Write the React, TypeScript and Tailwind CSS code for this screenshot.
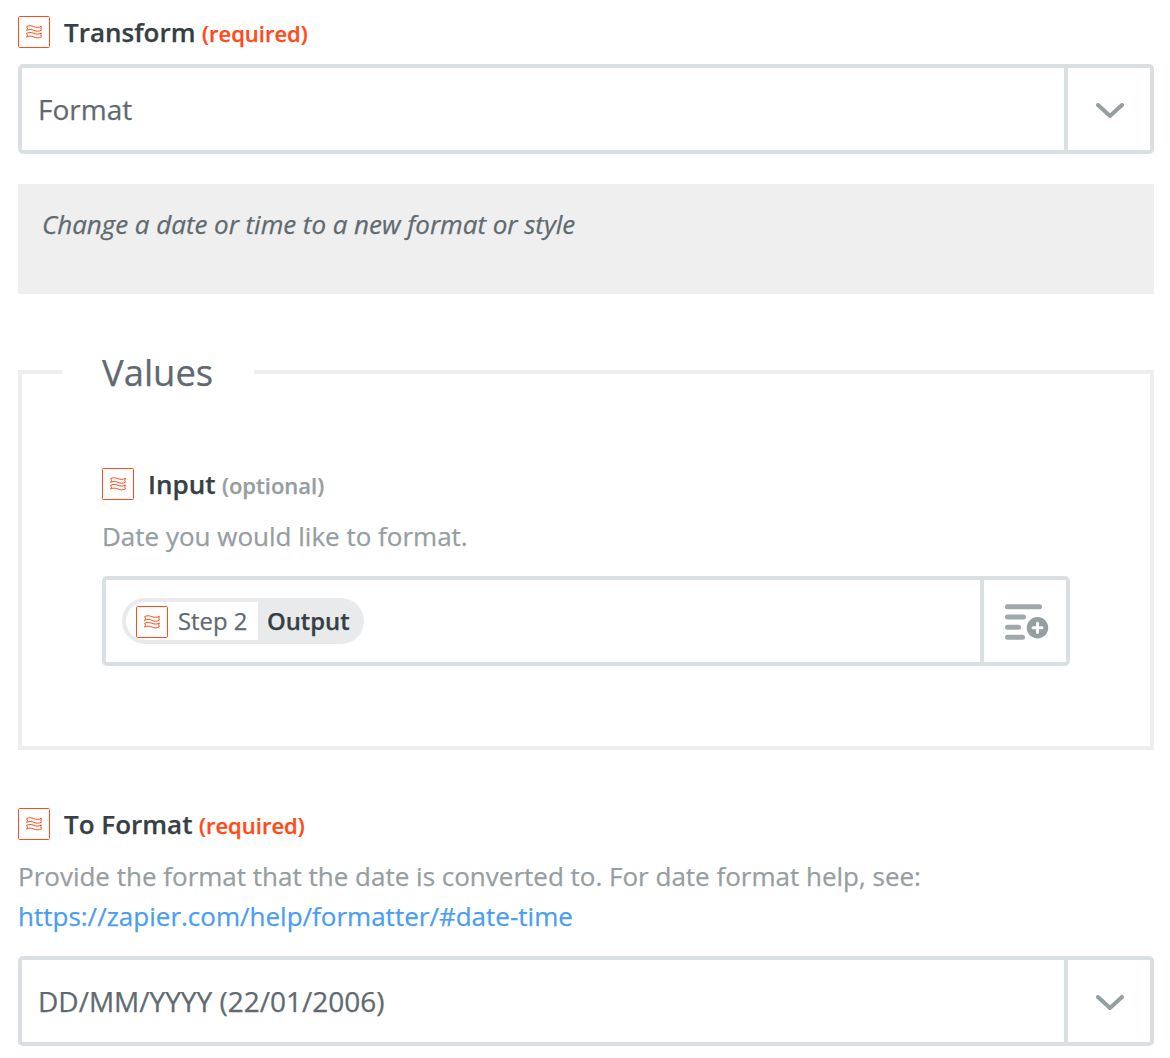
import React from "react";

interface FieldLabelProps {
  title: string;
  hint: string;
  required?: boolean;
}

interface SelectBoxProps {
  value: string;
}

const FormatterIcon: React.FC = () => (
  <svg width="32" height="32" viewBox="0 0 32 32" fill="none" className="shrink-0">
    <rect x="0.5" y="0.5" width="31" height="31" rx="1" stroke="#ff4a19" />
    <g stroke="#ff4a19" strokeWidth="1" strokeLinejoin="round">
      <path d="M8.6 10.7C10.6 9.4 13 9.4 15.8 10.6S21 11.6 23.4 10.3L22.8 12.2L23.4 14.2C21 15.5 18.6 15.5 15.8 14.3S10.6 13.2 8.6 14.4L9.5 12.5Z" />
      <path d="M8.6 17.4C10.6 16.1 13 16.1 15.8 17.3S21 18.3 23.4 17L22.8 18.9L23.4 20.9C21 22.2 18.6 22.2 15.8 21S10.6 19.9 8.6 21.1L9.5 19.2Z" />
    </g>
  </svg>
);

const FieldLabel: React.FC<FieldLabelProps> = ({ title, hint, required }) => (
  <div className="flex h-8 items-center">
    <FormatterIcon />
    <div className="ml-3.5 flex items-baseline gap-[6.5px] font-semibold leading-8 whitespace-nowrap">
      <span className="text-[26px] text-[#354044]">{title}</span>
      <span className={`text-[22px] ${required ? "text-[#ff4a19]" : "text-[#959ea1]"}`}>({hint})</span>
    </div>
  </div>
);

const SelectBox: React.FC<SelectBoxProps> = ({ value }) => (
  <div className="flex h-[90px] rounded-[5px] border-4 border-[#dae0e2] bg-white">
    <div className="flex flex-1 items-center pl-4 text-[28px] text-[#5f6a70]">{value}</div>
    <button className="flex w-[86px] items-center justify-center border-l-4 border-[#dae0e2] pt-1 pl-0.5">
      <svg width="28" height="16" viewBox="0 0 28 16" fill="none">
        <path d="M2 2L14 13L26 2" stroke="#959ea1" strokeWidth="4" strokeLinecap="round" strokeLinejoin="round" />
      </svg>
    </button>
  </div>
);

const InsertFieldIcon: React.FC = () => (
  <svg width="44" height="36" viewBox="0 0 44 36" fill="none">
    <path d="M2.5 2.7H34.5M2.5 13H18.5M2.5 23.2H13.5M2.5 33.2H17.5" stroke="#9fa8ab" strokeWidth="5" strokeLinecap="round" />
    <circle cx="32.5" cy="23.7" r="10.7" fill="#959ea1" />
    <path d="M32.5 19.2V28.2M28 23.7H37" stroke="white" strokeWidth="3" strokeLinecap="round" />
  </svg>
);

const App: React.FC = () => {
  return (
    <div className="h-[1058px] bg-white px-4.5 pr-4 pt-4 font-['Open_Sans',sans-serif] [-webkit-text-stroke:0.25px_currentColor]">
      <FieldLabel title="Transform" hint="required" required />
      <div className="mt-4">
        <SelectBox value="Format" />
      </div>

      <div className="mt-[30px] h-[110px] bg-[#efefef] px-6 pt-5 text-[26px] leading-10 tracking-[-0.04px] text-[#5f6a70] italic">
        Change a date or time to a new format or style
      </div>

      <fieldset className="mt-[54px] h-[402px] border-4 border-[#eee] px-10">
        <legend className="h-12 w-48 px-10 text-[36.4px] leading-12 text-[#5f6a70]">Values</legend>
        <div className="px-10 pt-[72px]">
          <FieldLabel title="Input" hint="optional" />
          <p className="mt-4 text-[26px] leading-10 text-[#959ea1]">Date you would like to format.</p>
          <div className="mt-5 flex h-[90px] rounded-[5px] border-4 border-[#dae0e2] bg-white">
            <div className="flex flex-1 items-center pl-4">
              <div className="flex h-[46px] w-[242px] overflow-hidden rounded-full border-4 border-[#e8eaec] bg-[#e8eaec] text-[23.8px]">
                <div className="flex w-[132px] items-center bg-white pt-0.5 pl-2.5 whitespace-nowrap text-[#5f6a70]">
                  <FormatterIcon />
                  <span className="ml-2.5">Step 2</span>
                </div>
                <div className="flex items-center pt-0.5 pl-[9px] font-semibold text-[#354044]">Output</div>
              </div>
            </div>
            <button className="flex w-[86px] items-center justify-center border-l-4 border-[#dae0e2] pt-0.5 pl-1">
              <InsertFieldIcon />
            </button>
          </div>
        </div>
      </fieldset>

      <div className="mt-[58px]">
        <FieldLabel title="To Format" hint="required" required />
      </div>
      <p className="mt-4 text-[26px] leading-10 text-[#959ea1]">
        Provide the format that the date is converted to. For date format help, see:
        <br />
        <a href="https://zapier.com/help/formatter/#date-time" className="text-[#499df3]">
          https://zapier.com/help/formatter/#date-time
        </a>
      </p>
      <div className="mt-5">
        <SelectBox value="DD/MM/YYYY (22/01/2006)" />
      </div>
    </div>
  );
};

export default App;
